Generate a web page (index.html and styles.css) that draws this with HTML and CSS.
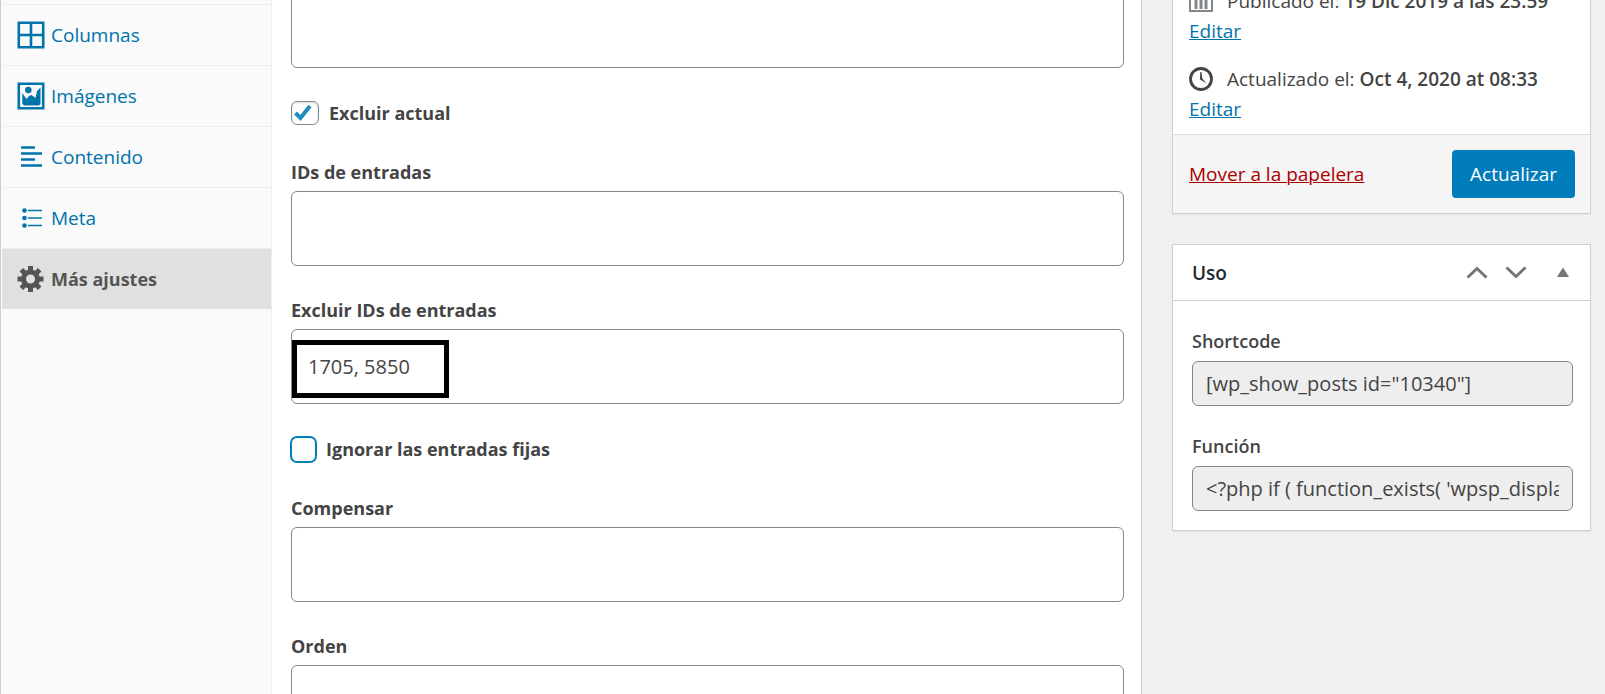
FILE: index.html
```html
<!DOCTYPE html>
<html lang="es">
<head>
<meta charset="utf-8">
<title>Más ajustes</title>
<link rel="stylesheet" href="styles.css">
</head>
<body>
<div class="page">
  <main class="panel">
    <nav class="tabs">
      <a class="tab" href="#columnas">
        <svg class="tab-icon" viewBox="0 0 28 28"><path fill="none" stroke="currentColor" stroke-width="2.600" d="M1.800 1.800h24.400v24.400H1.800zM14 2v24M2 14h24"/></svg>
        Columnas
      </a>
      <a class="tab" href="#imagenes">
        <svg class="tab-icon" viewBox="0 0 28 28"><path fill="none" stroke="currentColor" stroke-width="2.600" d="M1.800 1.800h24.400v24.400H1.800z"/><circle cx="11.300" cy="8" r="3.300" fill="currentColor"/><path fill="currentColor" d="M5.300 11l4.200 6 2.500-3 2.500-1 4 3 1.500-7 3.500-3.500v16.500l-1.500 1.500H7l-1.700-2z"/></svg>
        Imágenes
      </a>
      <a class="tab" href="#contenido">
        <svg class="tab-icon" viewBox="0 0 28 28"><path fill="none" stroke="currentColor" stroke-width="2.600" d="M4 4.500h14M4 10.500h21M4 16.500h14M4 22.500h21"/></svg>
        Contenido
      </a>
      <a class="tab" href="#meta">
        <svg class="tab-icon" viewBox="0 0 28 28"><path stroke="currentColor" stroke-width="1.600" d="M11 6.500h14M11 14h14M11 21.500h14"/><g fill="currentColor"><circle cx="7.500" cy="6.500" r="2.300"/><circle cx="7.500" cy="14" r="2.300"/><circle cx="7.500" cy="21.500" r="2.300"/></g></svg>
        Meta
      </a>
      <a class="tab tab-active" href="#ajustes">
        <svg class="tab-icon" viewBox="0 0 28 28"><circle cx="13.500" cy="14" r="7" fill="none" stroke="currentColor" stroke-width="5"/><path fill="none" stroke="currentColor" stroke-width="5" d="M13.500 1v5M13.500 22v5M.5 14h5M21.500 14h5M4.300 4.800l3.500 3.500M19.200 19.700l3.500 3.500M4.300 23.200l3.500-3.500M19.200 8.300l3.500-3.500"/></svg>
        Más ajustes
      </a>
    </nav>
    <form class="fields">
      <input class="text-input" type="text" aria-label="Taxonomía">
      <div class="check-row">
        <input class="check check-on" type="checkbox" id="excluir-actual" checked>
        <label class="label" for="excluir-actual">Excluir actual</label>
      </div>
      <div class="field">
        <label class="label" for="ids">IDs de entradas</label>
        <input class="text-input" type="text" id="ids">
      </div>
      <div class="field">
        <label class="label" for="excluir-ids">Excluir IDs de entradas</label>
        <div class="marked">
          <input class="text-input" type="text" id="excluir-ids" value="1705, 5850">
          <span class="mark"></span>
        </div>
      </div>
      <div class="check-row">
        <input class="check check-focus" type="checkbox" id="fijas">
        <label class="label" for="fijas">Ignorar las entradas fijas</label>
      </div>
      <div class="field">
        <label class="label" for="compensar">Compensar</label>
        <input class="text-input" type="text" id="compensar">
      </div>
      <div class="field">
        <label class="label" for="orden">Orden</label>
        <input class="text-input" type="text" id="orden">
      </div>
    </form>
  </main>
  <aside class="side">
    <section class="box">
      <div class="dates">
        <div>
          <div class="date-row">
            <svg class="date-icon date-icon-muted" viewBox="0 0 24 24"><path fill="none" stroke="currentColor" stroke-width="2" d="M1 3h22v19H1z"/><path stroke="currentColor" stroke-width="3" d="M7 6v14M12 6v14M17 6v14"/></svg>
            <span>Publicado el: <b>19 Dic 2019 a las 23:59</b></span>
          </div>
          <a class="link" href="#editar-publicado">Editar</a>
        </div>
        <div>
          <div class="date-row">
            <svg class="date-icon" viewBox="0 0 24 24"><circle cx="12" cy="12" r="10.500" fill="none" stroke="currentColor" stroke-width="2.800"/><path fill="currentColor" d="M11.300 5h1.200l.8 6.500 4.200 4.800-6.500-3.800z"/></svg>
            <span>Actualizado el: <b>Oct 4, 2020 at 08:33</b></span>
          </div>
          <a class="link" href="#editar-actualizado">Editar</a>
        </div>
      </div>
      <div class="actions">
        <a class="link link-trash" href="#papelera">Mover a la papelera</a>
        <button class="primary" type="button">Actualizar</button>
      </div>
    </section>
    <section class="box">
      <header class="box-head">
        <h2 class="box-title">Uso</h2>
        <div class="handles">
          <button class="handle" type="button" aria-label="Subir"><svg class="handle-icon" viewBox="0 0 22 22"><path fill="none" stroke="currentColor" stroke-width="3" d="M1.500 15.500l9.500-9 9.500 9"/></svg></button>
          <button class="handle" type="button" aria-label="Bajar"><svg class="handle-icon" viewBox="0 0 22 22"><path fill="none" stroke="currentColor" stroke-width="3" d="M1.500 5.500l9.500 9 9.500-9"/></svg></button>
          <button class="handle handle-toggle" type="button" aria-label="Plegar"><svg class="handle-icon" viewBox="0 0 22 22"><path fill="currentColor" d="M5 15h12L11 5.500z"/></svg></button>
        </div>
      </header>
      <div class="usage">
        <div class="usage-field">
          <label class="usage-label" for="shortcode">Shortcode</label>
          <input class="code" type="text" id="shortcode" readonly value="[wp_show_posts id=&quot;10340&quot;]">
        </div>
        <div class="usage-field">
          <label class="usage-label" for="funcion">Función</label>
          <input class="code" type="text" id="funcion" readonly value="&lt;?php if ( function_exists( 'wpsp_display' ) ) wpsp_display( 10340 ); ?&gt;">
        </div>
      </div>
    </section>
  </aside>
</div>
</body>
</html>
```
FILE: styles.css
```css
* {
  box-sizing: border-box;
}

body {
  margin: 0;
  height: 100vh;
  overflow: hidden;
  background: #f0f0f0;
  color: #444;
  font-family: "Open Sans", "Noto Sans", sans-serif;
  font-size: 19px;
  line-height: 28px;
}

input,
button {
  font: inherit;
  color: inherit;
}

/* The page sits slightly scrolled */
.page {
  display: flex;
  gap: 30px;
  height: calc(100vh + 8px);
  margin-top: -8px;
  padding-right: 14px;
  overflow: hidden;
}

.panel {
  flex: 1;
  display: flex;
  align-self: flex-start;
  background: #fff;
  border: 1px solid #ccd0d4;
}

.tabs {
  flex: none;
  width: 271px;
  padding: 11px 0 0 1px;
  background: #fafafa;
  border-right: 1px solid #eee;
}

.tab {
  display: flex;
  align-items: center;
  gap: 6px;
  height: 61px;
  padding: 0 15px;
  border-top: 1px solid #eee;
  color: #0073aa;
  text-decoration: none;
}

.tab-active {
  background: #e0e0e0;
  color: #555;
  font-size: 18px;
  font-weight: 700;
}

.tab-icon {
  flex: none;
  width: 28px;
  height: 28px;
}

.fields {
  flex: 1;
  display: flex;
  flex-direction: column;
  gap: 30px;
  padding: 0 17px 30px 19px;
}

.field {
  display: flex;
  flex-direction: column;
  gap: 5px;
}

.label {
  font-size: 18px;
  font-weight: 700;
}

.text-input {
  display: block;
  width: 100%;
  height: 75px;
  padding: 0 16px;
  background: #fff;
  border: 1px solid #7e8993;
  border-radius: 6px;
  font-size: 20px;
}

.check-row {
  display: flex;
  align-items: center;
  gap: 10px;
  height: 30px;
}

.check {
  appearance: none;
  flex: none;
  width: 28px;
  height: 24px;
  margin: 0;
  background: #fff;
  border: 1px solid #7e8993;
  border-radius: 6px;
  box-shadow: inset 0 1px 3px #0002;
}

.check-on {
  background: #fff url("data:image/svg+xml,%3Csvg xmlns='http://www.w3.org/2000/svg' viewBox='0 0 28 24'%3E%3Cpath d='M4.500 12l5 5 9.500-12' fill='none' stroke='%231e8cbe' stroke-width='4'/%3E%3C/svg%3E") center / 28px 24px no-repeat;
}

.check-focus {
  width: 25px;
  height: 25px;
  border-color: #007cba;
  box-shadow: 0 0 0 1px #007cba;
}

.marked {
  position: relative;
}

.mark {
  position: absolute;
  top: 11px;
  left: 1px;
  width: 157px;
  height: 58px;
  border: 5px solid #000;
  pointer-events: none;
}

.side {
  flex: none;
  width: 419px;
  display: flex;
  flex-direction: column;
  gap: 30px;
  margin-top: -8px;
}

.box {
  background: #fff;
  border: 1px solid #ccd0d4;
  box-shadow: 0 1px 1px #0000000a;
}

.dates {
  display: flex;
  flex-direction: column;
  gap: 18px;
  padding: 0 16px 11px;
}

.date-row {
  display: flex;
  align-items: center;
  gap: 14px;
  height: 32px;
  white-space: nowrap;
}

.date-row b {
  font-weight: 600;
}

.date-icon {
  flex: none;
  width: 24px;
  height: 24px;
}

.date-icon-muted {
  color: #82878c;
}

.link {
  color: #0073aa;
  text-decoration: underline;
  text-decoration-thickness: 1px;
}

.link-trash {
  color: #a00;
}

.actions {
  display: flex;
  align-items: center;
  justify-content: space-between;
  padding: 15px 15px 15px 16px;
  background: #f5f5f5;
  border-top: 1px solid #ddd;
}

.primary {
  height: 48px;
  padding: 0 18px;
  background: #007cba;
  color: #fff;
  border: 0;
  border-radius: 4px;
}

.box-head {
  display: flex;
  align-items: center;
  justify-content: space-between;
  height: 56px;
  padding: 0 16px 0 19px;
  border-bottom: 1px solid #ccd0d4;
}

.box-title {
  margin: 0;
  color: #23282d;
  font-size: 19px;
  font-weight: 600;
}

.handles {
  display: flex;
  gap: 17px;
}

.handle {
  display: flex;
  padding: 0;
  background: none;
  border: 0;
  color: #72777c;
}

.handle-toggle {
  margin-left: 8px;
}

.handle-icon {
  width: 22px;
  height: 22px;
}

.usage {
  display: flex;
  flex-direction: column;
  gap: 26px;
  padding: 26px 17px 19px 19px;
}

.usage-field {
  display: flex;
  flex-direction: column;
  gap: 6px;
}

.usage-label {
  font-size: 18px;
  font-weight: 600;
}

.code {
  width: 100%;
  height: 45px;
  padding: 0 13px;
  background: #eee;
  border: 1px solid #7e8993;
  border-radius: 6px;
  font-size: 20px;
}
```
